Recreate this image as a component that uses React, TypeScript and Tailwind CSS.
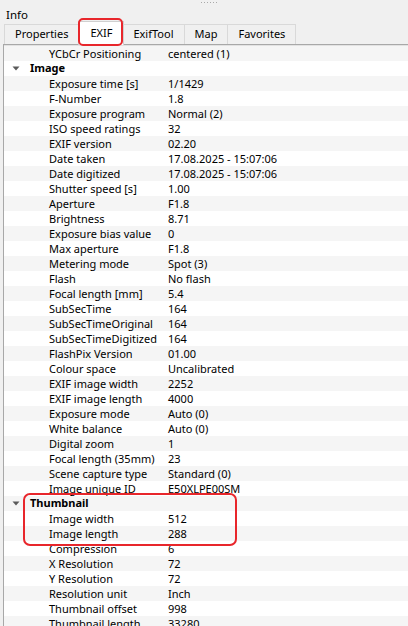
import React from 'react';

type Row =
  | { kind: 'group'; label: string }
  | { kind: 'item'; name: string; value: string };

const rows: Row[] = [
  { kind: 'item', name: 'YCbCr Positioning', value: 'centered (1)' },
  { kind: 'group', label: 'Image' },
  { kind: 'item', name: 'Exposure time [s]', value: '1/1429' },
  { kind: 'item', name: 'F-Number', value: '1.8' },
  { kind: 'item', name: 'Exposure program', value: 'Normal (2)' },
  { kind: 'item', name: 'ISO speed ratings', value: '32' },
  { kind: 'item', name: 'EXIF version', value: '02.20' },
  { kind: 'item', name: 'Date taken', value: '17.08.2025 - 15:07:06' },
  { kind: 'item', name: 'Date digitized', value: '17.08.2025 - 15:07:06' },
  { kind: 'item', name: 'Shutter speed [s]', value: '1.00' },
  { kind: 'item', name: 'Aperture', value: 'F1.8' },
  { kind: 'item', name: 'Brightness', value: '8.71' },
  { kind: 'item', name: 'Exposure bias value', value: '0' },
  { kind: 'item', name: 'Max aperture', value: 'F1.8' },
  { kind: 'item', name: 'Metering mode', value: 'Spot (3)' },
  { kind: 'item', name: 'Flash', value: 'No flash' },
  { kind: 'item', name: 'Focal length [mm]', value: '5.4' },
  { kind: 'item', name: 'SubSecTime', value: '164' },
  { kind: 'item', name: 'SubSecTimeOriginal', value: '164' },
  { kind: 'item', name: 'SubSecTimeDigitized', value: '164' },
  { kind: 'item', name: 'FlashPix Version', value: '01.00' },
  { kind: 'item', name: 'Colour space', value: 'Uncalibrated' },
  { kind: 'item', name: 'EXIF image width', value: '2252' },
  { kind: 'item', name: 'EXIF image length', value: '4000' },
  { kind: 'item', name: 'Exposure mode', value: 'Auto (0)' },
  { kind: 'item', name: 'White balance', value: 'Auto (0)' },
  { kind: 'item', name: 'Digital zoom', value: '1' },
  { kind: 'item', name: 'Focal length (35mm)', value: '23' },
  { kind: 'item', name: 'Scene capture type', value: 'Standard (0)' },
  { kind: 'item', name: 'Image unique ID', value: 'E50XLPE00SM' },
  { kind: 'group', label: 'Thumbnail' },
  { kind: 'item', name: 'Image width', value: '512' },
  { kind: 'item', name: 'Image length', value: '288' },
  { kind: 'item', name: 'Compression', value: '6' },
  { kind: 'item', name: 'X Resolution', value: '72' },
  { kind: 'item', name: 'Y Resolution', value: '72' },
  { kind: 'item', name: 'Resolution unit', value: 'Inch' },
  { kind: 'item', name: 'Thumbnail offset', value: '998' },
  { kind: 'item', name: 'Thumbnail length', value: '33280' },
];

const tabs = ['Properties', 'EXIF', 'ExifTool', 'Map', 'Favorites'];

function Caret() {
  return (
    <svg width="8" height="5" viewBox="0 0 8 5" className="shrink-0">
      <path d="M0.5 0.5 L7.5 0.5 L4 4.5 Z" fill="#5a5a5a" />
    </svg>
  );
}

export default function App() {
  return (
    <div
      className="relative w-[408px] h-[626px] overflow-hidden bg-[#f0f0f0] flex flex-col text-[11px] text-black"
      style={{ fontFamily: '"Noto Sans", "Open Sans", sans-serif' }}
    >
      {/* dock grip */}
      <div className="absolute left-[201px] top-[2px] flex gap-[2px]">
        {[0, 1, 2, 3, 4, 5].map((d) => (
          <div key={d} className="w-[1px] h-[1px] bg-[#a9a9a9]" />
        ))}
      </div>

      {/* title */}
      <div className="h-[28px] pl-[6px] pt-[6px] leading-[18px] text-[11.5px]">Info</div>

      {/* tab bar */}
      <div className="relative h-[20px] flex items-end pl-[4px]">
        {tabs.map((t) => {
          const active = t === 'EXIF';
          return (
            <div
              key={t}
              className={
                active
                  ? 'relative z-10 h-[24px] -mb-[1px] -ml-[1px] -mr-[1px] px-[11px] flex items-center bg-white border border-b-0 border-[#d0d0d0]'
                  : 'h-[20px] px-[10px] flex items-center bg-[#f0f0f0] border border-b-0 border-[#d9d9d9] -ml-[1px] first:ml-0'
              }
            >
              {t}
            </div>
          );
        })}
        {/* annotation around EXIF tab */}
        <div className="absolute left-[78px] top-[-6px] w-[45px] h-[28px] rounded-[5px] border-2 border-[#e8262b] z-20" />
      </div>

      {/* pane */}
      <div className="relative flex-1 ml-[3px] border-l border-t border-[#a8a8a8] bg-white">
        <div className="h-[1px] bg-[#e2e2e2]" />
        {rows.map((r, i) => {
          const bg = i % 2 === 0 ? 'bg-[#f5f5f5]' : 'bg-white';
          if (r.kind === 'group') {
            return (
              <div key={i} className={`h-[15px] flex items-center ${bg}`}>
                <div className="w-[26px] pl-[8px] flex items-center">
                  <Caret />
                </div>
                <span className="font-bold">{r.label}</span>
              </div>
            );
          }
          return (
            <div key={i} className={`h-[15px] flex items-center leading-[15px] ${bg}`}>
              <div className="w-[164px] pl-[45px] whitespace-nowrap">{r.name}</div>
              <div className="whitespace-nowrap">{r.value}</div>
            </div>
          );
        })}
        {/* annotation around Thumbnail rows */}
        <div className="absolute left-[19px] top-[448px] w-[214px] h-[53px] rounded-[7px] border-2 border-[#e8262b]" />
      </div>
    </div>
  );
}
